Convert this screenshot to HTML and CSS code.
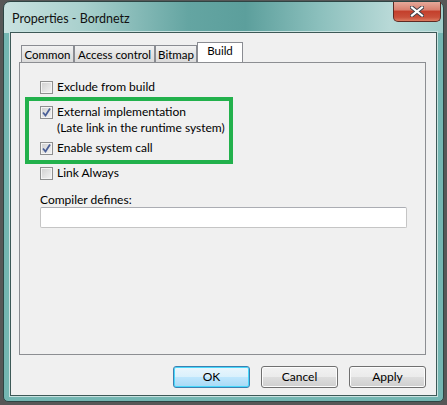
FILE: index.html
```html
<!DOCTYPE html>
<html lang="en">
<head>
    <meta charset="UTF-8">
    <title>Properties - Bordnetz</title>
    <link rel="stylesheet" href="styles.css">
</head>
<body>
    <div class="window">
        <div class="titlebar">
            <span class="title">Properties - Bordnetz</span>
            <div class="close">
                <svg width="14" height="11" viewBox="0 0 14 11">
                    <path d="M2 1.5 L12 9.5 M12 1.5 L2 9.5" stroke="#3b3f48" stroke-width="4" stroke-linecap="square"/>
                    <path d="M2 1.5 L12 9.5 M12 1.5 L2 9.5" stroke="#ffffff" stroke-width="2.2" stroke-linecap="square"/>
                </svg>
            </div>
        </div>
        <div class="client">
            <div class="tabs">
                <div class="tab tab-common">Common</div>
                <div class="tab tab-access">Access control</div>
                <div class="tab tab-bitmap">Bitmap</div>
                <div class="tab tab-build active">Build</div>
            </div>
            <div class="panel">
                <label class="check">
                    <span class="box"></span>
                    <span>Exclude from build</span>
                </label>
                <label class="check">
                    <span class="box checked"></span>
                    <span>External implementation<br>(Late link in the runtime system)</span>
                </label>
                <label class="check">
                    <span class="box checked"></span>
                    <span>Enable system call</span>
                </label>
                <label class="check">
                    <span class="box"></span>
                    <span>Link Always</span>
                </label>
                <div class="field">
                    <div class="field-label">Compiler defines:</div>
                    <div class="input"></div>
                </div>
                <div class="highlight"></div>
            </div>
            <div class="buttons">
                <div class="btn default">OK</div>
                <div class="btn">Cancel</div>
                <div class="btn">Apply</div>
            </div>
        </div>
    </div>
</body>
</html>
```

FILE: styles.css
```css
body {
    margin: 0;
    width: 447px;
    height: 405px;
    background: #575757;
    font-family: Lato, "Noto Sans", sans-serif;
    font-size: 12px;
    color: #000;
    overflow: hidden;
}
.window {
    margin: 1px 3px 0 3px;
    width: 441px;
    height: 401px;
    box-sizing: border-box;
    padding: 0 6px 6px 6px;
    border: 1px solid #2e4544;
    border-radius: 7px 7px 5px 5px;
    background:
        linear-gradient(to right, #c9e2e0 0%, #a9d0cd 18%, #64a5a2 42%, #5c9f9c 55%, #8cc0bd 72%, #b8d9d7 88%, #a1cecb 100%) top / 100% 31px no-repeat,
        #74b6b2;
}
.titlebar {
    height: 30px;
    display: flex;
    justify-content: space-between;
    align-items: flex-start;
}
.title {
    margin: 9px 0 0 2px;
    line-height: 16px;
    font-size: 12.5px;
    color: #111;
}
.close {
    width: 48px;
    height: 20px;
    margin-right: -4px;
    box-sizing: border-box;
    border: 1px solid #5e2a23;
    border-top: none;
    border-radius: 0 0 5px 5px;
    background: linear-gradient(#e6a99a 0%, #d98271 40%, #c4402c 50%, #c9503a 80%, #dc7b60 100%);
    display: flex;
    align-items: center;
    justify-content: center;
}
.client {
    height: 364px;
    box-sizing: border-box;
    background: #f0f0f0;
    border: 1px solid #3d5957;
    box-shadow: 0 0 0 1px #c8e2e0;
    padding: 9px 10px 0 8px;
}
.tabs {
    display: flex;
    align-items: flex-end;
    height: 21px;
    padding-left: 2px;
    margin-bottom: -1px;
    position: relative;
}
.tab {
    height: 18px;
    box-sizing: border-box;
    border: 1px solid #8a8c92;
    border-bottom: none;
    background: linear-gradient(#f2f2f2, #e3e3e3 50%, #d9d9d9);
    font-size: 11.5px;
    line-height: 17px;
    text-align: center;
    white-space: nowrap;
}
.tab-common { width: 53px; }
.tab-access { width: 81px; }
.tab-bitmap { width: 42px; }
.tab-build { width: 46px; }
.tab.active {
    height: 21px;
    padding-bottom: 3px;
    background: #fff;
    line-height: 15px;
}
.panel {
    position: relative;
    height: 293px;
    box-sizing: border-box;
    border: 1px solid #8c8e92;
    padding: 16px 0 0 20px;
}
.check {
    display: flex;
    align-items: flex-start;
    gap: 4px;
    line-height: 16px;
    margin-bottom: 9px;
}
.check:nth-child(2) {
    margin-bottom: 4px;
}
.box {
    width: 13px;
    height: 13px;
    box-sizing: border-box;
    flex: none;
    margin-top: 2px;
    border: 1px solid #8e8f8f;
    background: linear-gradient(135deg, #cfcfcf, #f4f4f4);
    box-shadow: inset 0 0 0 1px #f4f4f4;
}
.box.checked {
    background:
        url("data:image/svg+xml,%3Csvg xmlns='http://www.w3.org/2000/svg' width='11' height='11'%3E%3Cpath d='M2 5.5 L4.5 8.5 L9 1.5' fill='none' stroke='%234a5f97' stroke-width='1.8'/%3E%3C/svg%3E") center no-repeat,
        linear-gradient(135deg, #cfcfcf, #f4f4f4);
}
.field {
    margin-top: 11px;
}
.field-label {
    line-height: 16px;
    margin-bottom: -1px;
}
.input {
    width: 367px;
    height: 21px;
    box-sizing: border-box;
    border: 1px solid #c5c5c5;
    border-top-color: #abadb3;
    border-radius: 2px;
    background: #fff;
}
.highlight {
    position: absolute;
    left: 5px;
    top: 34px;
    width: 208px;
    height: 67px;
    box-sizing: border-box;
    border: 4px solid #22b14c;
}
.buttons {
    display: flex;
    justify-content: flex-end;
    gap: 11px;
    margin-top: 11px;
}
.btn {
    width: 77px;
    height: 22px;
    box-sizing: border-box;
    border: 1px solid #707070;
    border-radius: 3px;
    background: linear-gradient(#f2f2f2 0%, #ebebeb 50%, #dddddd 51%, #cfcfcf 100%);
    box-shadow: inset 0 0 0 1px #fcfcfc;
    text-align: center;
    line-height: 19px;
}
.btn.default {
    border-color: #3c7fb1;
    background: linear-gradient(#eaf6fd 0%, #d9f0fc 50%, #bee6fd 51%, #a7d9f5 100%);
    box-shadow: inset 0 0 0 1px #48d8fb;
}
```
